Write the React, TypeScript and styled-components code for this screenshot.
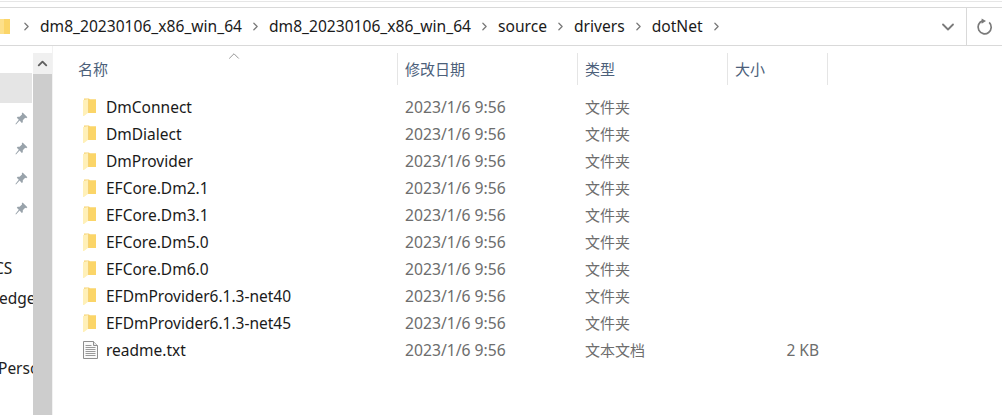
import React from "react";
import styled, { createGlobalStyle } from "styled-components";
import { ChevronRight, ChevronDown, ChevronUp } from "lucide-react";

const GlobalStyle = createGlobalStyle`
  html, body { margin: 0; padding: 0; background: #fff; overflow: hidden; }
  body { font-family: "Noto Sans", "Noto Sans CJK SC", sans-serif; }
`;

const Page = styled.div`
  width: 1002px;
  height: 415px;
  display: flex;
  flex-direction: column;
  overflow: hidden;
  background: #fff;
`;

const TopStrip = styled.div`
  height: 6px;
  box-sizing: border-box;
  border-top: 1px solid #e6e6e6;
  margin-top: 1px;
`;

const AddressRow = styled.div`
  height: 39px;
  box-sizing: border-box;
  display: flex;
  border-top: 1px solid #d9d9d9;
  border-bottom: 1px solid #d9d9d9;
`;

const Crumbs = styled.div`
  flex: 1;
  display: flex;
  align-items: center;
  padding-bottom: 1px;
  color: #1a1a1a;
  font-size: 15.6px;
  overflow: hidden;
`;

const CrumbText = styled.span`
  white-space: nowrap;
`;

const CrumbArrow = styled.span`
  width: 27px;
  display: flex;
  justify-content: center;
  color: #7a7a7a;
`;

const FolderStub = styled.span`
  display: flex;
  width: 10px;
  margin-right: 3px;
  overflow: hidden;
`;

const DropButton = styled.div`
  width: 36px;
  display: flex;
  align-items: center;
  justify-content: center;
  color: #7a7a7a;
`;

const RefreshButton = styled.div`
  width: 35px;
  border-left: 1px solid #d9d9d9;
  display: flex;
  align-items: center;
  justify-content: center;
`;

const Body = styled.div`
  flex: 1;
  display: flex;
  min-height: 0;
`;

const NavPane = styled.div`
  width: 33px;
  flex: none;
  padding-top: 27px;
  padding-right: 1px;
  box-sizing: border-box;
  display: flex;
  flex-direction: column;
  overflow: hidden;
`;

const NavItem = styled.div<{ $selected?: boolean; $gap?: number }>`
  height: 30px;
  flex: none;
  margin-top: ${(p) => p.$gap || 0}px;
  display: flex;
  align-items: center;
  background: ${(p) => (p.$selected ? "#e5e5e5" : "transparent")};
  font-size: 15.5px;
  color: #222;
  white-space: nowrap;
`;

const NavLabel = styled.span<{ $offset: number }>`
  margin-left: ${(p) => p.$offset}px;
`;

const PinSlot = styled.span`
  display: flex;
  margin-left: auto;
  margin-right: 4px;
`;

const Scrollbar = styled.div`
  width: 19px;
  flex: none;
  margin-top: 7px;
  display: flex;
  flex-direction: column;
  background: #f0f0f0;
`;

const ScrollUp = styled.div`
  height: 21px;
  display: flex;
  align-items: center;
  justify-content: center;
  color: #606060;
`;

const ScrollThumb = styled.div`
  flex: 1;
  background: #cdcdcd;
`;

const Content = styled.div`
  flex: 1;
  border-left: 1px solid #f2f2f2;
  padding-left: 25px;
  position: relative;
`;

const SortMark = styled.div`
  position: absolute;
  left: 172px;
  top: 1px;
  color: #8a8a8a;
  display: flex;
`;

const HeaderRow = styled.div`
  display: flex;
  height: 32px;
  margin-top: 7px;
  margin-bottom: 8px;
`;

const HeaderCell = styled.div<{ $w: number; $pad: number }>`
  width: ${(p) => p.$w}px;
  box-sizing: border-box;
  border-right: 1px solid #e5e5e5;
  padding-left: ${(p) => p.$pad}px;
  padding-bottom: 2px;
  display: flex;
  align-items: center;
  font-size: 15px;
  color: #4c607a;
`;

const FileRow = styled.div`
  display: flex;
  height: 27px;
  align-items: center;
  font-size: 15.5px;
`;

const NameCell = styled.div`
  width: 320px;
  display: flex;
  align-items: center;
  padding-left: 5px;
  box-sizing: border-box;
  color: #1a1a1a;
  white-space: nowrap;
`;

const IconSlot = styled.span`
  width: 23px;
  height: 20px;
  flex: none;
  display: flex;
  align-items: center;
`;

const DateCell = styled.div`
  width: 180px;
  padding-left: 7px;
  box-sizing: border-box;
  color: #6d6d6d;
  font-size: 15.7px;
  white-space: nowrap;
`;

const TypeCell = styled.div`
  width: 150px;
  padding-left: 7px;
  box-sizing: border-box;
  color: #6d6d6d;
  font-size: 15px;
`;

const SizeCell = styled.div`
  width: 91px;
  text-align: right;
  color: #6d6d6d;
`;

const FolderIcon = () => (
  <svg width="13" height="18" viewBox="0 0 13 18" style={{ flex: "none" }}>
    <path d="M1 0.5h5l1 1h6V15H1z" fill="#f7d472" />
    <path d="M6 1.5h7V15H6z" fill="#fbd568" />
    <path d="M0 2L5.5 1V14.5L1 18H0z" fill="#fff0b8" />
    <path d="M5.5 1V14.5L5 15V1.1z" fill="#eec25a" />
  </svg>
);

const TextFileIcon = () => (
  <svg width="15" height="18" viewBox="0 0 15 18" style={{ flex: "none" }}>
    <path d="M0.5 0.5h10l4 4v13h-14z" fill="#fafafa" stroke="#8f8f8f" />
    <path d="M10.5 0.5v4h4" fill="#e8e8e8" stroke="#8f8f8f" />
    <path
      d="M2.5 4.5h6M2.5 6.5h10M2.5 8.5h10M2.5 10.5h10M2.5 12.5h10M2.5 14.5h10"
      stroke="#9a9a9a"
      fill="none"
    />
  </svg>
);

const PinIcon = () => (
  <svg width="13" height="13" viewBox="0 0 13 13">
    <path
      d="M7.6 0.6 12.4 5.2 11.2 6.2 10.2 5.8 7.8 8.2 7.8 10.2 6.8 11 4.6 8.6 1 12.4 0.4 12 3.8 7.8 1.8 5.8 2.6 4.8 4.6 4.8 7 2.6 6.8 1.6z"
      fill="#99a3ab"
    />
  </svg>
);

const RefreshIcon = () => (
  <svg width="18" height="18" viewBox="0 0 18 18" fill="none">
    <path d="M13.2 4.4A6.6 6.6 0 1 1 6.6 2.9" stroke="#7a7a7a" strokeWidth="1.7" />
    <path d="M5.6 0.4V5.8L10 3z" fill="#7a7a7a" />
  </svg>
);

const crumbs = ["dm8_20230106_x86_win_64", "dm8_20230106_x86_win_64", "source", "drivers", "dotNet"];

const files = [
  { name: "DmConnect", type: "文件夹" },
  { name: "DmDialect", type: "文件夹" },
  { name: "DmProvider", type: "文件夹" },
  { name: "EFCore.Dm2.1", type: "文件夹" },
  { name: "EFCore.Dm3.1", type: "文件夹" },
  { name: "EFCore.Dm5.0", type: "文件夹" },
  { name: "EFCore.Dm6.0", type: "文件夹" },
  { name: "EFDmProvider6.1.3-net40", type: "文件夹" },
  { name: "EFDmProvider6.1.3-net45", type: "文件夹" },
  { name: "readme.txt", type: "文本文档", size: "2 KB" },
];

const navItems: { label?: string; offset?: number; gap?: number; pin?: boolean; selected?: boolean }[] = [
  { selected: true },
  { pin: true },
  { pin: true },
  { pin: true },
  { pin: true },
  {},
  { label: "CS", offset: -6 },
  { label: "edge", offset: -1 },
  {},
  { label: "Perso", offset: -2, gap: 10 },
];

export default function App() {
  return (
    <Page>
      <GlobalStyle />
      <TopStrip />
      <AddressRow>
        <Crumbs>
          <FolderStub>
            <svg width="10" height="15" viewBox="0 0 10 15" style={{ flex: "none" }}>
              <path d="M0 0H10V15H0z" fill="#fbd568" />
              <path d="M0 0H4V15H0z" fill="#fde08a" />
            </svg>
          </FolderStub>
          {crumbs.map((c, i) => (
            <React.Fragment key={i}>
              <CrumbArrow>
                <ChevronRight size={13} strokeWidth={2.4} />
              </CrumbArrow>
              <CrumbText>{c}</CrumbText>
            </React.Fragment>
          ))}
          <CrumbArrow>
            <ChevronRight size={13} strokeWidth={2.4} />
          </CrumbArrow>
        </Crumbs>
        <DropButton>
          <ChevronDown size={20} strokeWidth={2.2} />
        </DropButton>
        <RefreshButton>
          <RefreshIcon />
        </RefreshButton>
      </AddressRow>
      <Body>
        <NavPane>
          {navItems.map((n, i) => (
            <NavItem key={i} $selected={n.selected} $gap={n.gap}>
              {n.pin && (
                <PinSlot>
                  <PinIcon />
                </PinSlot>
              )}
              {n.label && <NavLabel $offset={n.offset || 0}>{n.label}</NavLabel>}
            </NavItem>
          ))}
        </NavPane>
        <Scrollbar>
          <ScrollUp>
            <ChevronUp size={15} strokeWidth={3} />
          </ScrollUp>
          <ScrollThumb />
        </Scrollbar>
        <Content>
          <SortMark>
            <ChevronUp size={18} strokeWidth={1.2} />
          </SortMark>
          <HeaderRow>
            <HeaderCell $w={320} $pad={0}>名称</HeaderCell>
            <HeaderCell $w={180} $pad={7}>修改日期</HeaderCell>
            <HeaderCell $w={150} $pad={7}>类型</HeaderCell>
            <HeaderCell $w={100} $pad={7}>大小</HeaderCell>
          </HeaderRow>
          {files.map((f) => (
            <FileRow key={f.name}>
              <NameCell>
                <IconSlot>{f.size ? <TextFileIcon /> : <FolderIcon />}</IconSlot>
                {f.name}
              </NameCell>
              <DateCell>2023/1/6 9:56</DateCell>
              <TypeCell>{f.type}</TypeCell>
              <SizeCell>{f.size}</SizeCell>
            </FileRow>
          ))}
        </Content>
      </Body>
    </Page>
  );
}
